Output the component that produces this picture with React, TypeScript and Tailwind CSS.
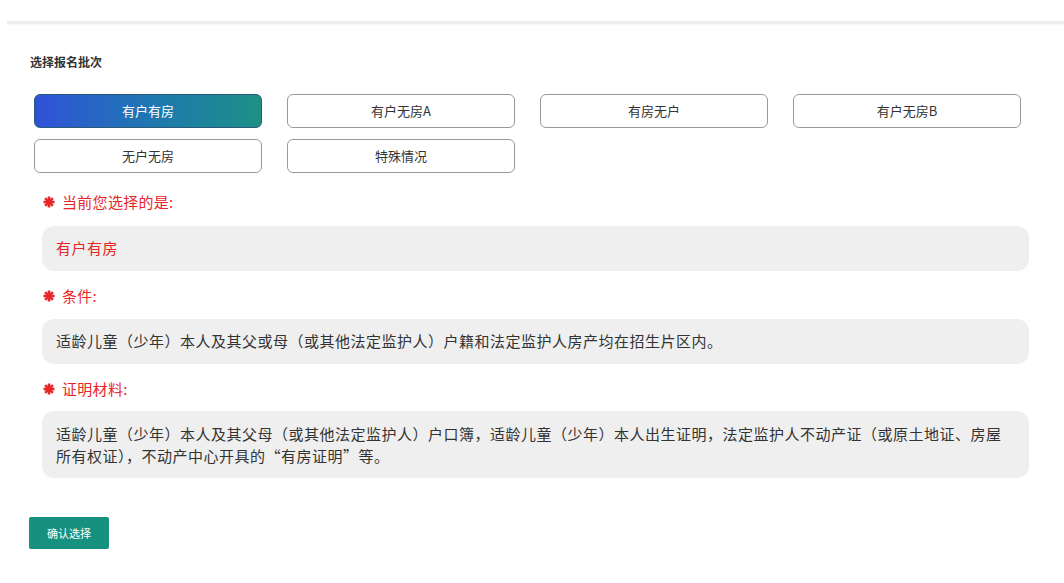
import { useState } from 'react';

const batches = ['有户有房', '有户无房A', '有房无户', '有户无房B', '无户无房', '特殊情况'];

const cjk = { fontFamily: '"Noto Sans CJK SC", "Noto Sans", sans-serif' };

function Asterisk() {
  return (
    <svg width="12" height="12" viewBox="0 0 12 12" className="mr-[7px]">
      <g stroke="#e8262a" strokeWidth="2.6" strokeLinecap="butt">
        <line x1="6" y1="0.5" x2="6" y2="11.5" />
        <line x1="0.5" y1="6" x2="11.5" y2="6" />
        <line x1="2.1" y1="2.1" x2="9.9" y2="9.9" />
        <line x1="9.9" y1="2.1" x2="2.1" y2="9.9" />
      </g>
      <circle cx="6" cy="6" r="2.6" fill="#e8262a" />
    </svg>
  );
}

function Label({ text }: { text: string }) {
  return (
    <div className="flex items-center h-[22px] ml-[13px] text-[15px] text-[#e8262a] leading-[22px]">
      <Asterisk />
      <span className="tracking-[0.3px]">{text}</span>
    </div>
  );
}

export default function App() {
  const [selected, setSelected] = useState('有户有房');

  return (
    <div className="w-[1064px] h-[583px] bg-white overflow-hidden" style={cjk}>
      <div className="ml-[7px] mt-[21px] h-[3px] bg-[#ececec] shadow-[0_1px_2px_rgba(0,0,0,0.04)]" />

      <div className="pl-[30px]">
        <h2 className="mt-[30px] text-[12px] leading-[16px] font-bold text-[#333]">选择报名批次</h2>

        <div className="ml-[4px] mt-[24px] w-[987px] grid grid-cols-4 gap-x-[25px] gap-y-[11px]">
          {batches.map((b) => (
            <button
              key={b}
              onClick={() => setSelected(b)}
              className={
                b === selected
                  ? 'h-[34px] rounded-[6px] text-[13px] text-white bg-gradient-to-r from-[#3150d8] to-[#1f9085] border border-[#2a5a7a]'
                  : 'h-[34px] rounded-[6px] text-[13px] text-[#333] bg-white border border-[#9a9a9a]'
              }
            >
              {b}
            </button>
          ))}
        </div>

        <div className="mt-[18px]">
          <Label text="当前您选择的是:" />
        </div>
        <div className="ml-[12px] mt-[13px] w-[987px] h-[45px] flex items-center pl-[14px] rounded-[12px] bg-[#efefef] text-[15px] tracking-[0.5px] text-[#e8262a]">
          {selected}
        </div>

        <div className="mt-[14px]">
          <Label text="条件:" />
        </div>
        <div className="ml-[12px] mt-[12px] w-[987px] h-[45px] flex items-center pl-[14px] rounded-[12px] bg-[#efefef] text-[15px] tracking-[0.5px] text-[#333]">
          适龄儿童（少年）本人及其父或母（或其他法定监护人）户籍和法定监护人房产均在招生片区内。
        </div>

        <div className="mt-[14px]">
          <Label text="证明材料:" />
        </div>
        <div className="ml-[12px] mt-[11px] w-[987px] py-[11.5px] pl-[14px] pr-[18px] rounded-[12px] bg-[#efefef] text-[15px] leading-[22px] tracking-[0.5px] text-[#333]">
          适龄儿童（少年）本人及其父母（或其他法定监护人）户口簿，适龄儿童（少年）本人出生证明，法定监护人不动产证（或原土地证、房屋所有权证），不动产中心开具的“有房证明”等。
        </div>

        <button className="-ml-[1px] mt-[39px] w-[80px] h-[32px] rounded-[2px] bg-[#16917f] text-white text-[11px]">
          确认选择
        </button>
      </div>
    </div>
  );
}
